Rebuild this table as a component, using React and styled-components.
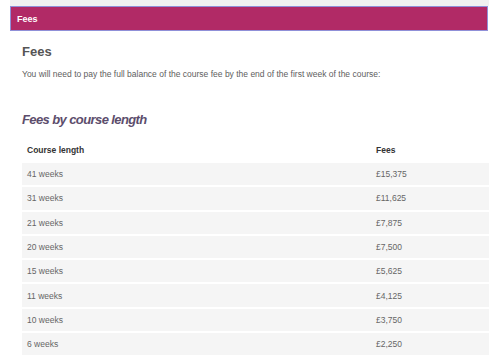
import styled, { createGlobalStyle } from "styled-components";

const GlobalStyle = createGlobalStyle`
	body {
		margin: 0;
		background: #fff;
		font-family: "Liberation Sans", Arial, sans-serif;
	}
`;

const Page = styled.div`
	margin-left: 10px;
	padding-top: 6px;
	background: linear-gradient(#f1f1f1 0, #f1f1f1 6px, #fff 6px);
`;

const Bar = styled.div`
	height: 23px;
	margin-right: 1px;
	display: flex;
	align-items: center;
	padding-left: 6px;
	background-color: #b12a66;
	border: 1px solid #9090d8;
	color: #fff;
	font-size: 9px;
	font-weight: bold;
`;

const Content = styled.div`
	padding: 13px 0 0 12px;
`;

const Heading = styled.h2`
	margin: 0;
	font-size: 13px;
	font-weight: bold;
	color: #555;
	line-height: 16px;
`;

const Intro = styled.p`
	margin: 8px 0 0;
	font-size: 8.5px;
	color: #5e5e5e;
	line-height: 12px;
`;

const SubHeading = styled.h3`
	margin: 31px 0 0;
	font-size: 13px;
	letter-spacing: -0.6px;
	font-style: italic;
	font-weight: bold;
	color: #5c4d6c;
	line-height: 18px;
`;

const Table = styled.table`
	margin-top: 10px;
	width: 100%;
	border-collapse: separate;
	border-spacing: 0;
	font-size: 8.5px;
	color: #666;
`;

const Th = styled.th`
	height: 22px;
	padding: 0 5px;
	text-align: left;
	color: #333;
	font-weight: bold;
	width: ${(props) => props.w || "auto"};
`;

const Row = styled.tr`
	background-color: #f5f5f5;
`;

const Td = styled.td`
	height: 22.3px;
	padding: 0 5px;
	border-top: 2px solid #fff;
`;

const fees = [
	["41 weeks", "£15,375"],
	["31 weeks", "£11,625"],
	["21 weeks", "£7,875"],
	["20 weeks", "£7,500"],
	["15 weeks", "£5,625"],
	["11 weeks", "£4,125"],
	["10 weeks", "£3,750"],
	["6 weeks", "£2,250"],
];

const App = () => {
	return (
		<>
			<GlobalStyle />
			<Page>
				<Bar>Fees</Bar>
				<Content>
					<Heading>Fees</Heading>
					<Intro>
						You will need to pay the full balance of the course fee by the end of the first week of the course:
					</Intro>
					<SubHeading>Fees by course length</SubHeading>
					<Table>
						<thead>
							<tr>
								<Th w="339px">Course length</Th>
								<Th>Fees</Th>
							</tr>
						</thead>
						<tbody>
							{fees.map(([length, fee]) => (
								<Row key={length}>
									<Td>{length}</Td>
									<Td>{fee}</Td>
								</Row>
							))}
						</tbody>
					</Table>
				</Content>
			</Page>
		</>
	);
};

export default App;
